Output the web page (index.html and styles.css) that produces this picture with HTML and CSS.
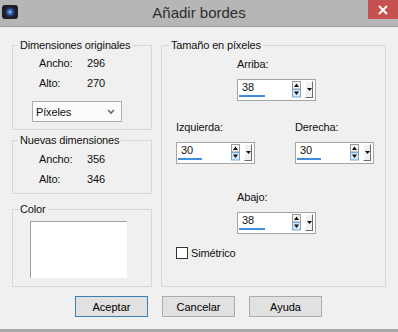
FILE: index.html
```html
<!DOCTYPE html>
<html lang="es">
<head>
  <meta charset="UTF-8">
  <title>Añadir bordes</title>
  <link rel="stylesheet" href="styles.css">
</head>
<body>
  <div class="window">
    <div class="titlebar">
      <svg class="app-icon" width="16" height="16" viewBox="0 0 16 16">
        <rect x="0" y="1" width="16" height="14" rx="3" fill="#1e1e22"/>
        <circle cx="8" cy="8" r="5.5" fill="#1c2a55"/>
        <circle cx="8" cy="8" r="3.5" fill="#3a5ea8"/>
        <circle cx="8" cy="8" r="1.5" fill="#8fb0e8"/>
      </svg>
      <div class="title">Añadir bordes</div>
      <div class="close">
        <svg width="10" height="10" viewBox="0 0 10 10">
          <path d="M1 1 L9 9 M9 1 L1 9" stroke="#fff" stroke-width="2"/>
        </svg>
      </div>
    </div>

    <div class="content">
      <div class="left-col">
        <fieldset class="group group-orig">
          <legend>Dimensiones originales</legend>
          <div class="dim-row"><span class="dim-label">Ancho:</span><span>296</span></div>
          <div class="dim-row"><span class="dim-label">Alto:</span><span>270</span></div>
          <div class="select">
            <span>Píxeles</span>
            <svg width="8" height="6" viewBox="0 0 8 6">
              <path d="M1 1 L4 4 L7 1" stroke="#6a6a6a" stroke-width="1.6" fill="none"/>
            </svg>
          </div>
        </fieldset>

        <fieldset class="group group-new">
          <legend>Nuevas dimensiones</legend>
          <div class="dim-row"><span class="dim-label">Ancho:</span><span>356</span></div>
          <div class="dim-row"><span class="dim-label">Alto:</span><span>346</span></div>
        </fieldset>

        <fieldset class="group group-color">
          <legend>Color</legend>
          <div class="swatch"></div>
        </fieldset>
      </div>

      <fieldset class="group group-size">
        <legend>Tamaño en píxeles</legend>

        <div class="field field-top">
          <div class="field-label">Arriba:</div>
          <div class="spin">
            <div class="spin-value">
              <span>38</span>
              <div class="spin-bar" style="width: 26px"></div>
            </div>
            <svg class="spin-arrows" width="9" height="17" viewBox="0 0 9 17">
              <rect x="0.5" y="0.5" width="8" height="7.5" fill="#f4f4f4" stroke="#9a9a9a"/>
              <rect x="0.5" y="8.5" width="8" height="7.5" fill="#d6e8f7" stroke="#7aa6cf"/>
              <path d="M2 6 L4.5 2.5 L7 6 Z" fill="#111"/>
              <path d="M2 10.5 L4.5 14 L7 10.5 Z" fill="#111"/>
            </svg>
            <div class="spin-drop">
              <svg width="5" height="3" viewBox="0 0 5 3"><path d="M0 0 L5 0 L2.5 3 Z" fill="#111"/></svg>
            </div>
          </div>
        </div>

        <div class="field-pair">
          <div class="field">
            <div class="field-label">Izquierda:</div>
            <div class="spin">
              <div class="spin-value">
                <span>30</span>
                <div class="spin-bar" style="width: 24px"></div>
              </div>
              <svg class="spin-arrows" width="9" height="17" viewBox="0 0 9 17">
                <rect x="0.5" y="0.5" width="8" height="7.5" fill="#f4f4f4" stroke="#9a9a9a"/>
                <rect x="0.5" y="8.5" width="8" height="7.5" fill="#d6e8f7" stroke="#7aa6cf"/>
                <path d="M2 6 L4.5 2.5 L7 6 Z" fill="#111"/>
                <path d="M2 10.5 L4.5 14 L7 10.5 Z" fill="#111"/>
              </svg>
              <div class="spin-drop">
                <svg width="5" height="3" viewBox="0 0 5 3"><path d="M0 0 L5 0 L2.5 3 Z" fill="#111"/></svg>
              </div>
            </div>
          </div>
          <div class="field">
            <div class="field-label">Derecha:</div>
            <div class="spin">
              <div class="spin-value">
                <span>30</span>
                <div class="spin-bar" style="width: 24px"></div>
              </div>
              <svg class="spin-arrows" width="9" height="17" viewBox="0 0 9 17">
                <rect x="0.5" y="0.5" width="8" height="7.5" fill="#f4f4f4" stroke="#9a9a9a"/>
                <rect x="0.5" y="8.5" width="8" height="7.5" fill="#d6e8f7" stroke="#7aa6cf"/>
                <path d="M2 6 L4.5 2.5 L7 6 Z" fill="#111"/>
                <path d="M2 10.5 L4.5 14 L7 10.5 Z" fill="#111"/>
              </svg>
              <div class="spin-drop">
                <svg width="5" height="3" viewBox="0 0 5 3"><path d="M0 0 L5 0 L2.5 3 Z" fill="#111"/></svg>
              </div>
            </div>
          </div>
        </div>

        <div class="field field-bottom">
          <div class="field-label">Abajo:</div>
          <div class="spin">
            <div class="spin-value">
              <span>38</span>
              <div class="spin-bar" style="width: 26px"></div>
            </div>
            <svg class="spin-arrows" width="9" height="17" viewBox="0 0 9 17">
              <rect x="0.5" y="0.5" width="8" height="7.5" fill="#f4f4f4" stroke="#9a9a9a"/>
              <rect x="0.5" y="8.5" width="8" height="7.5" fill="#d6e8f7" stroke="#7aa6cf"/>
              <path d="M2 6 L4.5 2.5 L7 6 Z" fill="#111"/>
              <path d="M2 10.5 L4.5 14 L7 10.5 Z" fill="#111"/>
            </svg>
            <div class="spin-drop">
              <svg width="5" height="3" viewBox="0 0 5 3"><path d="M0 0 L5 0 L2.5 3 Z" fill="#111"/></svg>
            </div>
          </div>
        </div>

        <label class="check">
          <span class="check-box"></span>
          <span>Simétrico</span>
        </label>
      </fieldset>
    </div>

    <div class="buttons">
      <button class="btn btn-default">Aceptar</button>
      <button class="btn">Cancelar</button>
      <button class="btn">Ayuda</button>
    </div>
  </div>
</body>
</html>
```

FILE: styles.css
```css
* { box-sizing: border-box; }

body {
  margin: 0;
  background-color: #f0f0f0;
  font-family: "Liberation Sans", Arial, sans-serif;
  font-size: 11px;
  letter-spacing: -0.15px;
  color: #111;
}

.window {
  width: 398px;
  height: 332px;
  display: flex;
  flex-direction: column;
  border-bottom: 3px solid #a9a9a9;
}

/* title bar */
.titlebar {
  height: 27px;
  display: grid;
  grid-template-columns: 30px 1fr 30px;
  background-color: #b6b6b6;
  border-bottom: 1px solid #9c9c9c;
}
.app-icon { margin: 4px 0 0 2px; }
.title {
  text-align: center;
  font-size: 15px;
  letter-spacing: 0;
  line-height: 26px;
  color: #2e2e2e;
}
.close {
  height: 19px;
  background-color: #c75050;
  display: flex;
  align-items: center;
  justify-content: center;
}

/* main area */
.content {
  display: grid;
  grid-template-columns: 140px 225px;
  column-gap: 9px;
  padding: 11px 12px 0;
}
.left-col {
  display: flex;
  flex-direction: column;
}

.group {
  margin: 0;
  padding: 0;
  min-width: 0;
  border: 1px solid #d7d7d7;
}
.group legend {
  padding: 0 2px;
  margin-left: 5px;
  line-height: 14px;
}
.group-orig { height: 92px; }
.group-new { height: 61px; margin-top: 3px; }
.group-color { height: 85px; margin-top: 8px; }
.group-size { height: 249px; }
.group-size legend { margin-left: 7px; }

.dim-row {
  display: flex;
  line-height: 20px;
  padding-left: 26px;
}
.group-orig .dim-row:first-of-type { margin-top: 1px; }
.group-new .dim-row:first-of-type { margin-top: 2px; }
.dim-label { width: 48px; }

.select {
  width: 90px;
  height: 21px;
  margin: 8px 0 0 19px;
  padding: 0 6px 0 3px;
  background-color: #fbfbfb;
  border: 1px solid #acacac;
  display: flex;
  align-items: center;
  justify-content: space-between;
}

.swatch {
  width: 97px;
  height: 57px;
  margin: 5px 0 0 17px;
  background-color: #fff;
  border-top: 1px solid #a0a0a0;
  border-left: 1px solid #a0a0a0;
}

/* size fields */
.field-label { line-height: 14px; }
.field-top { margin: 5px 0 0 75px; }
.field-pair {
  display: flex;
  gap: 40px;
  margin: 19px 0 0 14px;
}
.field-bottom { margin: 26px 0 0 75px; }
.field .spin { margin-top: 8px; }

.spin {
  width: 79px;
  height: 22px;
  background-color: #fff;
  border: 1px solid #a5a5a5;
  display: flex;
  align-items: flex-start;
  padding: 1px 2px 0 1px;
}
.spin-value {
  flex: 1;
}
.spin-value span {
  display: block;
  line-height: 13px;
  padding-left: 3px;
}
.spin-bar {
  height: 2px;
  margin-top: 1px;
  background-color: #3f8fde;
}
.spin-arrows { margin-right: 4px; }
.spin-drop {
  width: 8px;
  height: 17px;
  background-color: #f0f0f0;
  border-top: 1px solid #fff;
  border-left: 1px solid #fff;
  border-right: 1px solid #6a6a6a;
  border-bottom: 1px solid #6a6a6a;
  display: flex;
  align-items: center;
  justify-content: center;
}
.spin-drop svg { display: block; }

.check {
  display: flex;
  align-items: center;
  gap: 3px;
  margin: 13px 0 0 14px;
}
.check-box {
  width: 12px;
  height: 12px;
  background-color: #fff;
  border: 1px solid #333;
}

/* buttons */
.buttons {
  display: flex;
  gap: 14px;
  padding: 9px 0 0 75px;
}
.btn {
  width: 73px;
  height: 21px;
  padding: 0;
  font-family: "Liberation Sans", Arial, sans-serif;
  font-size: 11px;
  color: #000;
  background-color: #e1e1e1;
  border: 1px solid #adadad;
}
.btn-default { border-color: #3c7fb1; }
```
